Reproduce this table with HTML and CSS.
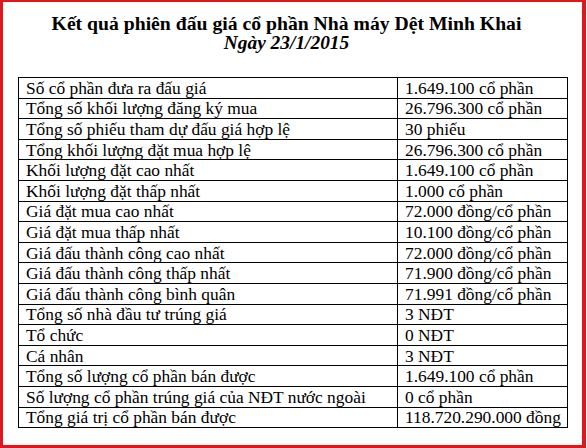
FILE: index.html
```html
<!DOCTYPE html>
<html lang="vi">
<head>
<meta charset="utf-8">
<title>Kết quả phiên đấu giá</title>
<link rel="stylesheet" href="styles.css">
</head>
<body>
<div class="frame">
  <div class="heading">
    <div class="title">Kết quả phiên đấu giá cổ phần Nhà máy Dệt Minh Khai</div>
    <div class="date">Ngày 23/1/2015</div>
  </div>
  <table class="results">
    <tr><td class="label">Số cổ phần đưa ra đấu giá</td><td class="value">1.649.100 cổ phần</td></tr>
    <tr><td class="label">Tổng số khối lượng đăng ký mua</td><td class="value">26.796.300 cổ phần</td></tr>
    <tr><td class="label">Tổng số phiếu tham dự đấu giá hợp lệ</td><td class="value">30 phiếu</td></tr>
    <tr><td class="label">Tổng khối lượng đặt mua hợp lệ</td><td class="value">26.796.300 cổ phần</td></tr>
    <tr><td class="label">Khối lượng đặt cao nhất</td><td class="value">1.649.100 cổ phần</td></tr>
    <tr><td class="label">Khối lượng đặt thấp nhất</td><td class="value">1.000 cổ phần</td></tr>
    <tr><td class="label">Giá đặt mua cao nhất</td><td class="value">72.000 đồng/cổ phần</td></tr>
    <tr><td class="label">Giá đặt mua thấp nhất</td><td class="value">10.100 đồng/cổ phần</td></tr>
    <tr><td class="label">Giá đấu thành công cao nhất</td><td class="value">72.000 đồng/cổ phần</td></tr>
    <tr><td class="label">Giá đấu thành công thấp nhất</td><td class="value">71.900 đồng/cổ phần</td></tr>
    <tr><td class="label">Giá đấu thành công bình quân</td><td class="value">71.991 đồng/cổ phần</td></tr>
    <tr><td class="label">Tổng số nhà đầu tư trúng giá</td><td class="value">3 NĐT</td></tr>
    <tr><td class="label">Tổ chức</td><td class="value">0 NĐT</td></tr>
    <tr><td class="label">Cá nhân</td><td class="value">3 NĐT</td></tr>
    <tr><td class="label">Tổng số lượng cổ phần bán được</td><td class="value">1.649.100 cổ phần</td></tr>
    <tr><td class="label">Số lượng cổ phần trúng giá của NĐT nước ngoài</td><td class="value">0 cổ phần</td></tr>
    <tr><td class="label">Tổng giá trị cổ phần bán được</td><td class="value">118.720.290.000 đồng</td></tr>
  </table>
</div>
</body>
</html>
```

FILE: styles.css
```css
html, body {
  margin: 0;
  padding: 0;
  background: #ffffff;
}
body {
  font-family: "Liberation Serif", "Times New Roman", serif;
  color: #000;
}
.frame {
  box-sizing: border-box;
  width: 586px;
  height: 448px;
  border-style: solid;
  border-color: #e3161c;
  border-width: 2px 4px 3px 3px;
  background: #fff;
  padding-top: 11px;
}
.heading {
  text-align: center;
  padding-right: 12px;
  font-weight: bold;
  font-size: 19.7px;
  line-height: 20px;
}
.date {
  font-style: italic;
  font-size: 19.4px;
}
.results {
  margin-top: 24px;
  margin-left: 15px;
  width: 550px;
  border-collapse: collapse;
  table-layout: fixed;
  font-size: 17.4px;
}
.results tr {
  height: 20.6px;
}
.results td {
  border: 1px solid #000;
  padding: 0 7px;
  vertical-align: middle;
  white-space: nowrap;
  line-height: 18px;
}
.results .label {
  width: 364px;
}
```
